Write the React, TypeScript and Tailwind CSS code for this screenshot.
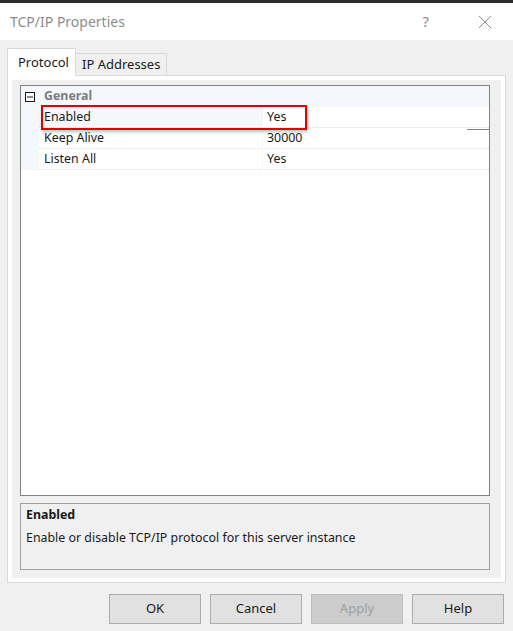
import React from 'react';

const rows = [
  { name: 'Enabled', value: 'Yes', selected: true },
  { name: 'Keep Alive', value: '30000', selected: false },
  { name: 'Listen All', value: 'Yes', selected: false },
];

const buttons = [
  { label: 'OK', disabled: false },
  { label: 'Cancel', disabled: false },
  { label: 'Apply', disabled: true },
  { label: 'Help', disabled: false },
];

export default function App() {
  return (
    <div className="w-[513px] h-[631px] bg-[#f0f0f0] overflow-hidden font-['Noto_Sans',sans-serif] text-[12.4px] text-[#1a1a1a]">
      <div className="h-[3px] bg-[#2b2b2b]" />

      {/* title bar */}
      <div className="h-[37px] bg-white flex items-center pl-[10px]">
        <span className="text-[14px] text-[#8c8c8c] leading-none">TCP/IP Properties</span>
        <span className="ml-auto mr-[49px] text-[15px] text-[#8c8c8c] leading-none">?</span>
        <svg width="14" height="14" viewBox="0 0 14 14" className="mr-[21px]">
          <path d="M1 1 L13 13 M13 1 L1 13" stroke="#8c8c8c" strokeWidth="1" fill="none" />
        </svg>
      </div>

      {/* tabs */}
      <div className="pt-[8px] px-[7px]">
        <div className="flex items-end h-[27px] relative z-10">
          <div className="h-[28px] w-[69px] bg-white border border-[#d9d9d9] border-b-0 flex items-center pl-[10px] -mb-[1px] text-[13px]">
            Protocol
          </div>
          <div className="h-[22px] w-[91px] bg-[#f0f0f0] border border-[#d9d9d9] border-l-0 border-b-0 flex items-center pl-[6px] text-[13px]">
            IP Addresses
          </div>
        </div>

        {/* tab panel */}
        <div className="h-[508px] border border-[#d9d9d9] bg-white p-[4px]">
          <div className="h-full bg-[#f0f0f0] pl-[8px] pr-[11px] pt-[5px] flex flex-col">
            {/* property grid */}
            <div className="h-[411px] border border-[#828282] bg-white relative">
              <div className="flex h-[21px] bg-[#f4f7fc]">
                <div className="w-[18px] flex items-center justify-center">
                  <svg width="10" height="10" viewBox="0 0 10 10">
                    <rect x="0.5" y="0.5" width="9" height="9" fill="white" stroke="#1a1a1a" />
                    <path d="M2 5 H8" stroke="#1a1a1a" />
                  </svg>
                </div>
                <div className="pl-[5px] flex items-center font-bold text-[#7c7c7c]">General</div>
              </div>
              {rows.map((r) => (
                <div key={r.name} className="flex h-[21px]">
                  <div className="w-[18px] bg-[#f4f7fc]" />
                  <div
                    className={`w-[223px] pl-[5px] flex items-center border-b border-dotted border-[#dedede] ${
                      r.selected ? 'bg-[#f5f7fb]' : 'bg-white'
                    }`}
                  >
                    {r.name}
                  </div>
                  <div className="flex-1 pl-[4px] flex items-center border-l border-[#ececec] border-b border-dotted border-b-[#dedede]">
                    {r.value}
                  </div>
                </div>
              ))}

              {/* highlight annotation */}
              <div className="absolute left-[20px] top-[19px] w-[266px] h-[25px] border-2 border-[#e00000] shadow-[1px_2px_3px_rgba(0,0,0,0.25)]" />
              <div className="absolute left-[446px] top-[43px] w-[22px] h-[1px] bg-[#808080]" />
            </div>

            {/* description */}
            <div className="mt-[7px] h-[67px] border border-[#a0a0a0] bg-[#f0f0f0] px-[5px] pt-[1px]">
              <div className="font-bold leading-[20px]">Enabled</div>
              <div className="mt-[3px] leading-[20px]">Enable or disable TCP/IP protocol for this server instance</div>
            </div>
          </div>
        </div>
      </div>

      {/* buttons */}
      <div className="mt-[11px] flex justify-end gap-[9px] pr-[9px]">
        {buttons.map((b) => (
          <div
            key={b.label}
            className={`w-[92px] h-[30px] flex items-center justify-center border text-[13px] ${
              b.disabled
                ? 'bg-[#cccccc] border-[#bfbfbf] text-[#a0a0a0]'
                : 'bg-[#e1e1e1] border-[#adadad] text-[#1a1a1a]'
            }`}
          >
            {b.label}
          </div>
        ))}
      </div>
    </div>
  );
}
